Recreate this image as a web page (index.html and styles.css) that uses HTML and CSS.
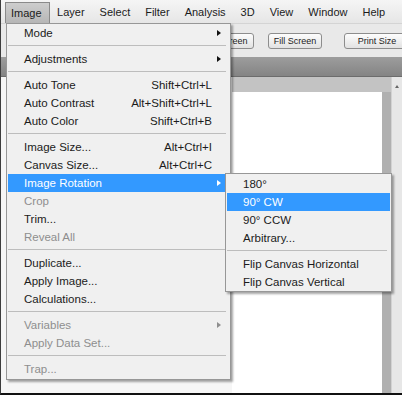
FILE: index.html
```html
<!DOCTYPE html>
<html>
<head>
<meta charset="utf-8">
<link rel="stylesheet" href="styles.css">
</head>
<body>
<div class="screen">
  <div class="menubar">
    <span class="mb-item active">Image</span>
    <span class="mb-item">Layer</span>
    <span class="mb-item">Select</span>
    <span class="mb-item">Filter</span>
    <span class="mb-item">Analysis</span>
    <span class="mb-item">3D</span>
    <span class="mb-item">View</span>
    <span class="mb-item">Window</span>
    <span class="mb-item">Help</span>
  </div>
  <div class="toolbar">
    <span class="tb-btn fit">Fit Screen</span>
    <span class="tb-btn fill">Fill Screen</span>
    <span class="tb-btn print">Print Size</span>
  </div>
  <div class="docband"></div>
  <div class="workspace">
    <div class="panel"></div>
    <div class="docarea">
      <div class="canvas"></div>
      <div class="strip"></div>
    </div>
    <div class="vscroll"><span class="up"></span></div>
  </div>

  <div class="menu">
    <div class="mi"><span>Mode</span><span class="key"></span><span class="arrow"></span></div>
    <div class="sep"></div>
    <div class="mi"><span>Adjustments</span><span class="key"></span><span class="arrow"></span></div>
    <div class="sep"></div>
    <div class="mi"><span>Auto Tone</span><span class="key">Shift+Ctrl+L</span></div>
    <div class="mi"><span>Auto Contrast</span><span class="key">Alt+Shift+Ctrl+L</span></div>
    <div class="mi"><span>Auto Color</span><span class="key">Shift+Ctrl+B</span></div>
    <div class="sep"></div>
    <div class="mi"><span>Image Size...</span><span class="key">Alt+Ctrl+I</span></div>
    <div class="mi"><span>Canvas Size...</span><span class="key">Alt+Ctrl+C</span></div>
    <div class="mi hl"><span>Image Rotation</span><span class="key"></span><span class="arrow"></span></div>
    <div class="mi dis"><span>Crop</span></div>
    <div class="mi"><span>Trim...</span></div>
    <div class="mi dis"><span>Reveal All</span></div>
    <div class="sep"></div>
    <div class="mi"><span>Duplicate...</span></div>
    <div class="mi"><span>Apply Image...</span></div>
    <div class="mi"><span>Calculations...</span></div>
    <div class="sep"></div>
    <div class="mi dis"><span>Variables</span><span class="key"></span><span class="arrow"></span></div>
    <div class="mi dis"><span>Apply Data Set...</span></div>
    <div class="sep"></div>
    <div class="mi dis"><span>Trap...</span></div>
  </div>

  <div class="menu submenu">
    <div class="mi"><span>180°</span></div>
    <div class="mi hl"><span>90° CW</span></div>
    <div class="mi"><span>90° CCW</span></div>
    <div class="mi"><span>Arbitrary...</span></div>
    <div class="sep"></div>
    <div class="mi"><span>Flip Canvas Horizontal</span></div>
    <div class="mi"><span>Flip Canvas Vertical</span></div>
  </div>
</div>
</body>
</html>
```
FILE: styles.css
```css
* { box-sizing: border-box; }
body {
  margin: 0;
  font-family: "Liberation Sans", Arial, sans-serif;
  font-size: 11.5px;
  color: #1b1b1b;
}
.screen {
  position: relative;
  width: 402px;
  height: 395px;
  overflow: hidden;
  border-left: 1px solid #3c3c3c;
  border-bottom: 2px solid #111;
  display: flex;
  flex-direction: column;
  background: #f5f5f5;
}

/* menu bar */
.menubar {
  height: 23px;
  flex: none;
  display: flex;
  align-items: flex-end;
  padding-left: 4px;
  background: linear-gradient(#f5f5f5, #e6e6e6);
  font-size: 11px;
}
.mb-item {
  height: 21px;
  line-height: 21px;
  padding: 0 7.5px;
  white-space: nowrap;
}
.mb-item.active {
  line-height: 20px;
  background: linear-gradient(#cdcdcd, #b6b6b6);
  border: 1px solid #8a8a8a;
  border-bottom: none;
  padding: 0 7px 0 5px;
}

/* options bar */
.toolbar {
  height: 34px;
  flex: none;
  display: flex;
  align-items: flex-start;
  padding: 9px 0 0 199px;
  background: #e9e9e9;
  border-top: 1px solid #d4d4d4;
}
.tb-btn {
  flex: none;
  height: 16px;
  font-size: 9px;
  line-height: 14px;
  text-align: center;
  color: #222;
  border: 1px solid #8d8d8d;
  border-radius: 3px;
  background: linear-gradient(#fdfdfd, #e2e2e2);
  white-space: nowrap;
}
.tb-btn.fit { width: 54px; margin-right: 14px; }
.tb-btn.fill { width: 54px; margin-right: 22px; }
.tb-btn.print { width: 66px; }

/* document tab band */
.docband {
  height: 20px;
  flex: none;
  background: linear-gradient(#9d9d9d, #848484);
  border-bottom: 1px solid #6c6c6c;
}

/* workspace */
.workspace {
  flex: 1;
  display: flex;
}
.panel {
  width: 231px;
  flex: none;
  background: #f6f6f6;
}
.docarea {
  flex: 1;
  display: flex;
  padding-top: 15px;
  background: #c3c3c3;
}
.canvas {
  flex: 1;
  background: #fff;
}
.strip {
  width: 9px;
  flex: none;
  background: #b0b0b0;
}
.vscroll {
  width: 11px;
  flex: none;
  display: flex;
  justify-content: center;
  padding-top: 8px;
  background: #e7e7e7;
  border-left: 1px solid #d2d2d2;
}
.vscroll .up {
  width: 0;
  height: 0;
  border-left: 2px solid transparent;
  border-right: 2px solid transparent;
  border-bottom: 3px solid #666;
}

/* drop-down menus */
.menu {
  position: absolute;
  left: 5px;
  top: 23px;
  width: 225px;
  display: flex;
  flex-direction: column;
  padding: 0 1px 1px;
  background: #f0f0f0;
  border: 1px solid #979797;
  box-shadow: 2px 2px 2px rgba(0, 0, 0, 0.35);
}
.submenu {
  left: 224px;
  top: 173px;
  width: 167px;
  padding: 1px 1px 0;
}
.mi {
  height: 18px;
  line-height: 18px;
  display: grid;
  grid-template-columns: 1fr auto 17px;
  align-items: center;
  padding-left: 16px;
  white-space: nowrap;
}
.submenu .mi { grid-template-columns: 1fr; }
.mi .key { text-align: right; }
.mi .arrow {
  justify-self: start;
  margin-left: 5px;
  width: 0;
  height: 0;
  border-left: 4px solid #111;
  border-top: 3.5px solid transparent;
  border-bottom: 3.5px solid transparent;
}
.mi.hl { background: #3399ff; color: #fff; }
.mi.hl .arrow { border-left-color: #fff; }
.mi.dis { color: #8e8e8e; }
.mi.dis .arrow { border-left-color: #8e8e8e; }
.sep {
  height: 8px;
  padding-top: 3px;
}
.sep::before {
  content: "";
  display: block;
  height: 1px;
  margin-right: 3px;
  background: #bdbdbd;
}
```
